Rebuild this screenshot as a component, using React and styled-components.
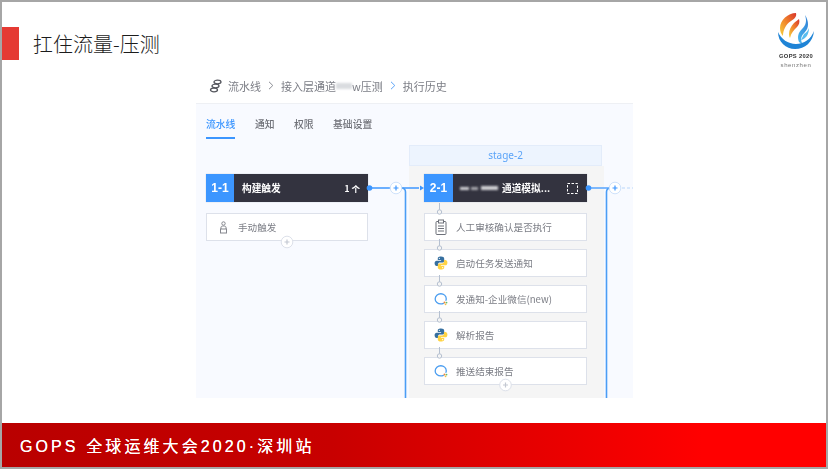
import React from 'react'
import styled, { createGlobalStyle } from 'styled-components'

const Global = createGlobalStyle`
html,body{margin:0;padding:0;background:#fff;}
body{font-family:"Noto Sans CJK SC","Noto Sans",sans-serif;}
`
const Slide = styled.div`
width:828px;
height:469px;
box-sizing:border-box;
border:2px solid #a6a6a6;
background:#fff;
display:flex;
flex-direction:column;
overflow:hidden;
`
const Header = styled.div`
height:66px;
display:flex;
justify-content:space-between;
align-items:flex-start;
padding-top:25px;
box-sizing:border-box;
position:relative;
`
const TitleWrap = styled.div`
display:flex;
align-items:center;
gap:14px;
`
const Marker = styled.div`
width:17px;
height:33px;
background:#e53a33;
`
const Title = styled.h1`
margin:0;
font-size:20px;
line-height:33px;
font-weight:300;
color:#1c1c1c;
`
const LogoBox = styled.div`
position:absolute;
right:8px;
top:10px;
width:44px;
display:flex;
flex-direction:column;
align-items:center;
filter:blur(.3px);
`
const LogoMark = styled.svg`
margin-bottom:2px;
`
const LogoText = styled.span`
font-family:"Liberation Sans",sans-serif;
font-size:${p => p.$size}px;
line-height:9px;
letter-spacing:${p => p.$spacing}px;
color:${p => p.$color};
white-space:nowrap;
font-weight:${p => p.$weight || 400};
`
const Main = styled.div`
flex:1;
padding-left:194px;
`
const Shot = styled.div`
width:437px;
height:330px;
display:flex;
flex-direction:column;
filter:blur(.45px);
overflow:hidden;
`
const Crumbs = styled.div`
height:36px;
box-sizing:border-box;
border-bottom:1px solid #eef0f4;
padding-left:13px;
display:flex;
align-items:center;
font-size:11px;
color:#7b7d85;
background:#fff;
`
const CrumbText = styled.span`
margin-left:${p => p.$gap || 0}px;
white-space:nowrap;
`
const Smudge = styled.span`
display:inline-block;
width:${p => p.$w}px;
height:${p => p.$h || 6}px;
margin-right:${p => p.$gap || 0}px;
background:${p => p.$color || '#c9ccd2'};
filter:blur(1px);
`
const Sep = styled.svg`
width:6px;
height:9px;
margin:0 7px;
flex:none;
`
const Body = styled.div`
flex:1;
background:#f8faff;
display:flex;
flex-direction:column;
`
const Tabs = styled.div`
height:41px;
box-sizing:border-box;
padding:11px 0 0 10px;
display:flex;
gap:19.5px;
align-items:flex-start;
`
const Tab = styled.div`
font-size:9.8px;
line-height:18px;
height:22px;
font-weight:500;
color:${p => p.$active ? '#3c96ff' : '#6f7178'};
border-bottom:${p => p.$active ? '2px solid #3c96ff' : 'none'};
`
const Canvas = styled.div`
flex:1;
position:relative;
display:flex;
padding-left:10px;
gap:41px;
`
const LeftCol = styled.div`
width:162px;
padding-top:29px;
display:flex;
flex-direction:column;
gap:11px;
`
const StageCol = styled.div`
width:195px;
display:flex;
flex-direction:column;
`
const StageHead = styled.div`
width:193px;
height:21px;
box-sizing:border-box;
background:#edf4fe;
border:1px solid #e3ecfa;
color:#5ba4f8;
font-size:10px;
line-height:19px;
text-align:center;
font-family:"Noto Sans",sans-serif;
`
const StageBody = styled.div`
flex:1;
background:#f5f5f5;
padding:8px 17px 0 15px;
display:flex;
flex-direction:column;
gap:8px;
`
const Job = styled.div`
height:28px;
flex:none;
display:flex;
align-items:center;
background:#33333f;
color:#fff;
box-shadow:0 0 1px #b9bcc6;
`
const JobNum = styled.div`
width:${p => p.$w}px;
height:100%;
background:#3c96ff;
font-family:"Liberation Sans",sans-serif;
font-size:12px;
font-weight:700;
display:flex;
align-items:center;
justify-content:center;
`
const JobName = styled.div`
flex:1;
margin-left:${p => p.$gap}px;
font-size:9.7px;
font-weight:700;
white-space:nowrap;
display:flex;
align-items:center;
`
const JobTail = styled.div`
font-size:8.5px;
font-weight:700;
margin-right:${p => p.$gap}px;
display:flex;
align-items:center;
`
const StageJobs = styled.div`
display:flex;
flex-direction:column;
gap:8px;
margin-top:3px;
`
const Task = styled.div`
height:28px;
flex:none;
box-sizing:border-box;
background:#fff;
border:1px solid #dde1ea;
display:flex;
align-items:center;
padding-left:9px;
font-size:9.6px;
color:#7b7d85;
white-space:nowrap;
`
const IconSlot = styled.div`
width:14px;
height:14px;
margin-right:8px;
display:flex;
align-items:center;
justify-content:center;
flex:none;
`
const Wires = styled.svg`
position:absolute;
left:0;
top:0;
pointer-events:none;
`
const Footer = styled.div`
height:44px;
flex:none;
background:linear-gradient(90deg,#b90000 0%,#c80000 40%,#ff0000 85%,#ff0000 100%);
color:#fff;
padding-left:18px;
display:flex;
align-items:center;
font-family:"Liberation Sans","Noto Sans CJK SC",sans-serif;
font-size:16px;
letter-spacing:3.1px;
white-space:nowrap;
font-weight:400;
text-shadow:0 0 .5px #fff;
`

const Python = () => (
  <svg width="14" height="14" viewBox="0 0 24 24">
    <path fill="#366f9f" d="M12 1C7 1 6.500 3 6.500 4.500V7h5.700v1H4.500C2.500 8 1 9.800 1 12.500S2.500 17 4.500 17H7v-2.800C7 12.500 8.300 11.300 10 11.300h4.800c1.500 0 2.700-1.200 2.700-2.700V4.500C17.500 2.500 15.500 1 12 1zM9.200 3a1 1 0 1 1 0 2.100A1 1 0 0 1 9.200 3z" />
    <path fill="#ffd343" d="M12 23c5 0 5.500-2 5.500-3.500V17h-5.700v-1h7.700c2 0 3.500-1.800 3.500-4.500S21.500 7 19.500 7H17v2.800c0 1.700-1.300 2.900-3 2.900H9.200c-1.500 0-2.700 1.200-2.700 2.700v4.100C6.500 21.500 8.500 23 12 23zm2.800-2a1 1 0 1 1 0-2.100 1 1 0 0 1 0 2.100z" />
  </svg>
)

const Bubble = () => (
  <svg width="14" height="14" viewBox="0 0 24 24">
    <path fill="none" stroke="#4a9df0" strokeWidth="2.200" strokeLinecap="round" d="M16 19.500c-1.300.7-2.800 1-4.300 1C6.500 20.500 2 17 2 11.800S6.500 3 11.700 3c5 0 9.300 3.500 9.300 8.500 0 1-.2 1.900-.5 2.700" />
    <circle cx="18" cy="18" r="1.700" fill="#f0883a" />
    <circle cx="21.500" cy="18" r="1.500" fill="#5cbf6b" />
    <circle cx="19.800" cy="21" r="1.500" fill="#f2c14a" />
  </svg>
)

const Clipboard = () => (
  <svg width="14" height="16" viewBox="0 0 14 16" fill="none" stroke="#6d7079" strokeWidth="1">
    <rect x="2" y="2.500" width="10" height="13" rx="1" />
    <rect x="4.500" y="1" width="5" height="3" fill="#fff" />
    <path d="M4 7h6M4 9.500h6M4 12h6" />
  </svg>
)

const Person = () => (
  <svg width="9" height="13" viewBox="0 0 9 13" fill="none" stroke="#85878e" strokeWidth="1">
    <circle cx="4.500" cy="2.500" r="1.700" />
    <path d="M2 8V6.200c0-.7 1-1.200 2.500-1.200S7 5.500 7 6.200V8" />
    <rect x="1.500" y="8" width="6" height="4" />
  </svg>
)

const Chevron = ({ color = '#8a8c93' }) => (
  <Sep viewBox="0 0 6 9" fill="none" stroke={color} strokeWidth="1">
    <path d="M1 .8 4.800 4.500 1 8.200" />
  </Sep>
)

const Plus = ({ x, y, color = '#3c96ff', ring = '#cfe2fb' }) => (
  <g>
    <circle cx={x} cy={y} r="5.800" fill="#fff" stroke={ring} />
    <path d={`M${x - 2.500} ${y}h5M${x} ${y - 2.500}v5`} stroke={color} strokeWidth="1.200" />
  </g>
)

const taskDots = [67, 103, 139, 175, 211]

function Connections() {
  return (
    <Wires width="437" height="253" fill="none">
      <path d="M173 43H223" stroke="#3c96ff" strokeWidth="1.300" />
      <path d="M205 43Q209.500 43 209.500 47V253" stroke="#4a9df5" strokeWidth="1.600" />
      <path d="M228 43l-4-2.500v5z" fill="#3c96ff" />
      <circle cx="173.500" cy="43" r="2.800" fill="#3c96ff" />
      <Plus x={200} y={43} />
      <path d="M392 43H419" stroke="#3c96ff" strokeWidth="1.300" />
      <path d="M415 43Q410.500 43 410.500 47V253" stroke="#4a9df5" strokeWidth="1.600" />
      <circle cx="392.500" cy="43" r="2.800" fill="#3c96ff" />
      <Plus x={419} y={43} />
      <path d="M426 43H437" stroke="#b9d6fa" strokeDasharray="3 2" />
      <Plus x={91} y={97} color="#c3c8d2" ring="#dde1ea" />
      {taskDots.map(y => (
        <g key={y}>
          <path d={`M243.500 ${y - 9}V${y - 2}`} stroke="#b5c0d0" />
          <circle cx="243.500" cy={y} r="2.200" fill="#f5f5f5" stroke="#b5c0d0" />
        </g>
      ))}
      <Plus x={309.500} y={240} color="#c3c8d2" ring="#dde1ea" />
    </Wires>
  )
}

function Logo() {
  return (
    <LogoBox>
      <LogoMark width="40" height="38" viewBox="0 0 40 38">
        <defs>
          <linearGradient id="flame" x1="0" y1="1" x2="1" y2="0">
            <stop offset="0" stopColor="#f7d23e" />
            <stop offset=".5" stopColor="#f0842c" />
            <stop offset="1" stopColor="#d8342a" />
          </linearGradient>
          <linearGradient id="swirl" x1="1" y1="0" x2="0" y2="1">
            <stop offset="0" stopColor="#2f7fd6" />
            <stop offset="1" stopColor="#4bb8ee" />
          </linearGradient>
        </defs>
        <path fill="url(#flame)" d="M20 1C12 1 4 8 4 16c0 3 1 6 3 8 0-6 3-12 8-15 3-2 6-4 5-8z" />
        <path fill="url(#flame)" d="M18 11c-3 3-5 7-5 11 0 2 .5 3 1 4 1-5 4-8 7-11 2-2 3-5 2-8-1 1-3 2-5 4z" />
        <path fill="url(#swirl)" d="M29 3c2 6 1 10-3 14-4 4-5 8-3 13 1 1 2 1 3 1-2-5 0-8 3-11 4-4 4-11 0-17z" />
        <path fill="#1f84d6" d="M2 20c0 10 8 17 17 17 10 0 18-7 19-18-3 8-10 13-18 13C12 32 5 27 2 20z" />
        <path fill="#58bdf0" d="M28 22c2-1 4-3 5-6 0 6-3 11-8 12 1-2 2-4 3-6z" />
      </LogoMark>
      <LogoText $size={5.800} $spacing={0.300} $color="#333" $weight={700}>GOPS 2020</LogoText>
      <LogoText $size={6} $spacing={0.600} $color="#777">shenzhen</LogoText>
    </LogoBox>
  )
}

export default function App() {
  return (
    <Slide>
      <Global />
      <Header>
        <TitleWrap>
          <Marker />
          <Title>扛住流量-压测</Title>
        </TitleWrap>
        <Logo />
      </Header>
      <Main>
        <Shot>
          <Crumbs>
            <svg width="14" height="14" viewBox="0 0 14 14" fill="none" stroke="#55575e" strokeWidth="1.300">
              <ellipse cx="8.500" cy="3" rx="3.500" ry="1.800" />
              <ellipse cx="6.500" cy="7" rx="3.500" ry="1.800" />
              <ellipse cx="5" cy="11" rx="3.500" ry="1.800" />
            </svg>
            <CrumbText $gap={5}>流水线</CrumbText>
            <Chevron />
            <CrumbText>接入层通道</CrumbText>
            <Smudge $w={16} $color="#dadce0" />
            <CrumbText>w压测</CrumbText>
            <Chevron color="#5ba4f8" />
            <CrumbText>执行历史</CrumbText>
          </Crumbs>
          <Body>
            <Tabs>
              <Tab $active>流水线</Tab>
              <Tab>通知</Tab>
              <Tab>权限</Tab>
              <Tab>基础设置</Tab>
            </Tabs>
            <Canvas>
              <LeftCol>
                <Job>
                  <JobNum $w={28}>1-1</JobNum>
                  <JobName $gap={8}>构建触发</JobName>
                  <JobTail $gap={8}>1 个</JobTail>
                </Job>
                <Task>
                  <IconSlot><Person /></IconSlot>
                  手动触发
                </Task>
              </LeftCol>
              <StageCol>
                <StageHead>stage-2</StageHead>
                <StageBody>
                  <Job>
                    <JobNum $w={29}>2-1</JobNum>
                    <JobName $gap={7}>
                      <Smudge $w={9} $h={3} $gap={2} $color="#d0d0d4" />
                      <Smudge $w={7} $h={3} $gap={3} $color="#a8a8ae" />
                      <Smudge $w={17} $h={4} $gap={4} $color="#d0d0d4" />
                      通道模拟...
                    </JobName>
                    <JobTail $gap={9}>
                      <svg width="11" height="11" viewBox="0 0 11 11" fill="none" stroke="#fff">
                        <rect x=".5" y=".5" width="10" height="10" strokeDasharray="2.500 1.500" />
                      </svg>
                    </JobTail>
                  </Job>
                  <StageJobs>
                    <Task>
                      <IconSlot><Clipboard /></IconSlot>
                      人工审核确认是否执行
                    </Task>
                    <Task>
                      <IconSlot><Python /></IconSlot>
                      启动任务发送通知
                    </Task>
                    <Task>
                      <IconSlot><Bubble /></IconSlot>
                      发通知-企业微信(new)
                    </Task>
                    <Task>
                      <IconSlot><Python /></IconSlot>
                      解析报告
                    </Task>
                    <Task>
                      <IconSlot><Bubble /></IconSlot>
                      推送结束报告
                    </Task>
                  </StageJobs>
                </StageBody>
              </StageCol>
              <Connections />
            </Canvas>
          </Body>
        </Shot>
      </Main>
      <Footer>GOPS 全球运维大会2020·深圳站</Footer>
    </Slide>
  )
}
